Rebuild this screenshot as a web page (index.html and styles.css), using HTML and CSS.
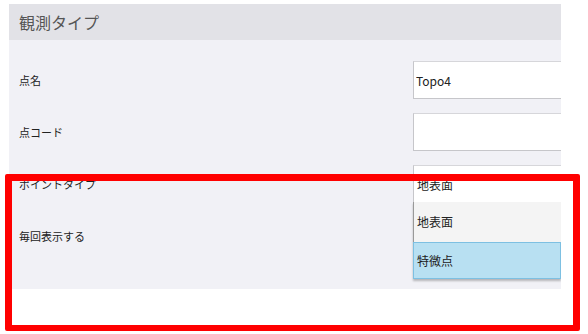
FILE: index.html
```html
<!DOCTYPE html>
<html lang="ja">
<head>
<meta charset="UTF-8">
<meta name="viewport" content="width=device-width, initial-scale=1.0">
<title>観測タイプ</title>
<link rel="stylesheet" href="styles.css">
</head>
<body>

<div class="card">
    <div class="card-header">観測タイプ</div>
    <div class="card-body">
        <div class="row">
            <label class="label">点名</label>
            <div class="field"><input class="input" type="text" value="Topo4"></div>
        </div>
        <div class="row">
            <label class="label">点コード</label>
            <div class="field"><input class="input" type="text" value=""></div>
        </div>
        <div class="row">
            <label class="label">ポイントタイプ</label>
            <div class="field">
                <div class="select">地表面</div>
                <!-- 開いているドロップダウン -->
                <ul class="dropdown">
                    <li class="option">地表面</li>
                    <li class="option selected">特微点</li>
                </ul>
            </div>
        </div>
        <div class="row">
            <label class="label">毎回表示する</label>
        </div>
    </div>
</div>

<div class="highlight"></div>

</body>
</html>
```

FILE: styles.css
```css
body {
    font-family: "Noto Sans CJK JP", "Noto Sans", sans-serif;
    margin: 0;
    padding: 4px 0 0 9px;
    background-color: #fff;
    color: #222;
}
.card {
    width: 552px;
    background-color: #f1f1f6;
    overflow: hidden;
}
.card-header {
    height: 36px;
    line-height: 36px;
    padding-left: 10px;
    background-color: #e2e2e7;
    color: #555;
    font-size: 16px;
}
.card-body {
    padding: 21px 0 34px 10px;
}
.row {
    display: flex;
    align-items: center;
    height: 38px;
    margin-bottom: 14px;
}
.row:last-child {
    margin-bottom: 0;
}
.label {
    flex-shrink: 0;
    width: 394px;
    font-size: 11px;
}
.field {
    position: relative;
    flex-shrink: 0;
    width: 170px;
    height: 38px;
}
.input,
.select {
    box-sizing: border-box;
    width: 100%;
    height: 38px;
    margin: 0;
    padding: 0 0 0 2px;
    border: 1px solid #c6c6ca;
    border-top-color: #d6d6da;
    background-color: #fff;
    font-family: inherit;
    font-size: 12px;
    color: #222;
    outline: none;
}
.select {
    line-height: 38px;
    padding-left: 3px;
    border-bottom-color: #aaa;
}
.dropdown {
    position: absolute;
    top: 37px;
    left: 0;
    width: 148px;
    margin: 0;
    padding: 0;
    list-style: none;
    box-shadow: 0 2px 2px rgba(0, 0, 0, 0.25);
}
.option {
    box-sizing: border-box;
    height: 40px;
    line-height: 40px;
    padding-left: 3px;
    background-color: #f4f4f4;
    border-left: 1px solid #999;
    font-size: 12px;
}
.option.selected {
    height: 37px;
    line-height: 35px;
    background-color: #b8e0f2;
    border: 1px solid #7dc0e2;
}
.highlight {
    position: absolute;
    left: 5px;
    top: 174px;
    width: 575px;
    height: 157px;
    box-sizing: border-box;
    border: 7px solid #ff0000;
    border-bottom-width: 6px;
    border-radius: 2px;
}
```
